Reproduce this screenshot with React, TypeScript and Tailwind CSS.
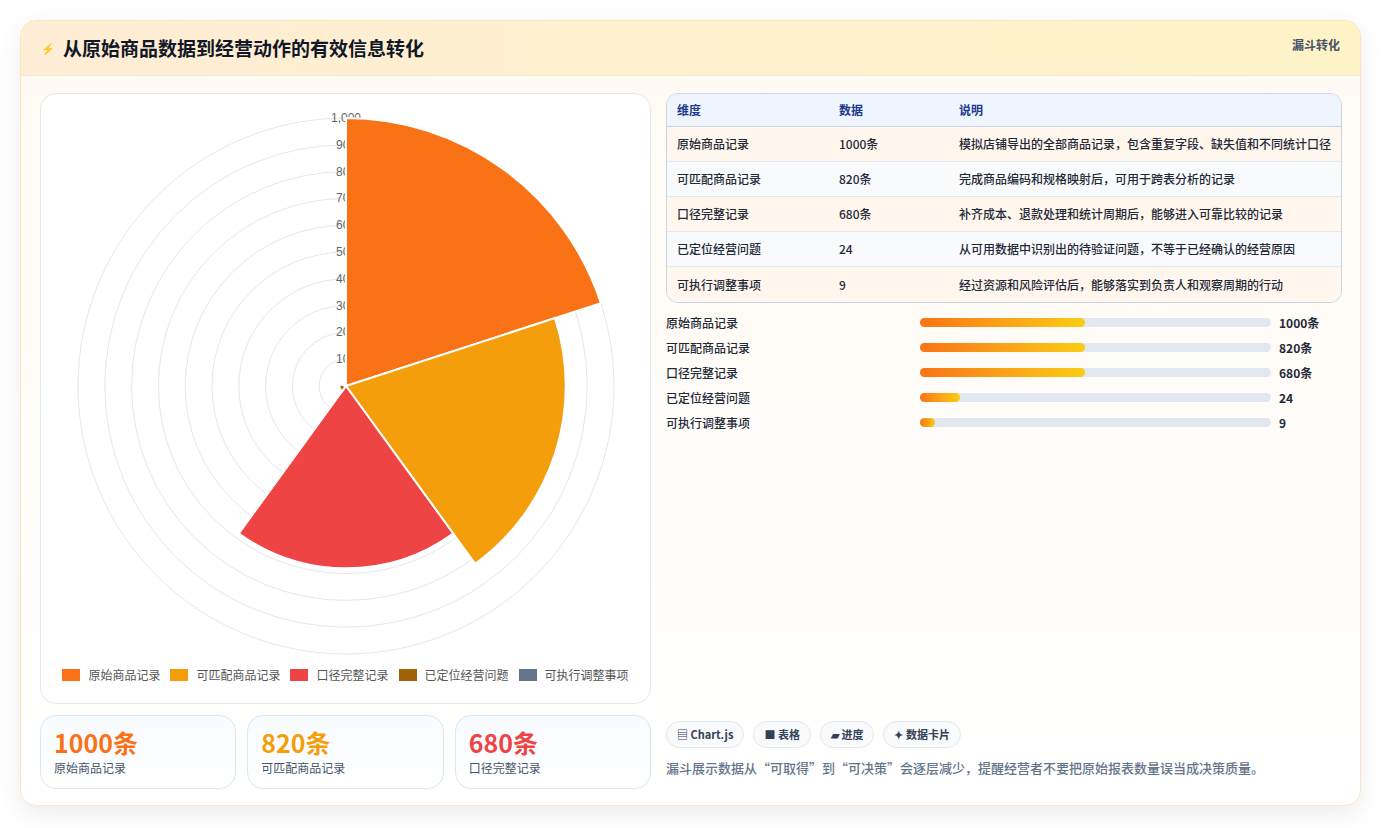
import React from "react";

const rows = [
  ["原始商品记录", "1000条", "模拟店铺导出的全部商品记录，包含重复字段、缺失值和不同统计口径"],
  ["可匹配商品记录", "820条", "完成商品编码和规格映射后，可用于跨表分析的记录"],
  ["口径完整记录", "680条", "补齐成本、退款处理和统计周期后，能够进入可靠比较的记录"],
  ["已定位经营问题", "24", "从可用数据中识别出的待验证问题，不等于已经确认的经营原因"],
  ["可执行调整事项", "9", "经过资源和风险评估后，能够落实到负责人和观察周期的行动"],
];
const bars = [
  ["原始商品记录", 165, "1000条"],
  ["可匹配商品记录", 165, "820条"],
  ["口径完整记录", 165, "680条"],
  ["已定位经营问题", 40, "24"],
  ["可执行调整事项", 15, "9"],
] as const;
const segs = [
  { v: 1000, c: "#f97316", n: "原始商品记录" },
  { v: 820, c: "#f59e0b", n: "可匹配商品记录" },
  { v: 680, c: "#ef4444", n: "口径完整记录" },
  { v: 24, c: "#a16207", n: "已定位经营问题" },
  { v: 9, c: "#64748b", n: "可执行调整事项" },
];

function Polar() {
  const cx = 305, cy = 289, R = 268;
  const arc = (r: number, a0: number, a1: number) => {
    const p = (a: number) => [cx + r * Math.cos((a * Math.PI) / 180), cy + r * Math.sin((a * Math.PI) / 180)];
    const [x0, y0] = p(a0), [x1, y1] = p(a1);
    return `M${cx},${cy} L${x0},${y0} A${r},${r} 0 0 1 ${x1},${y1} Z`;
  };
  return (
    <svg width="610" height="565" className="block">
      {Array.from({ length: 10 }, (_, i) => (
        <circle key={i} cx={cx} cy={cy} r={(R * (i + 1)) / 10} fill="none" stroke="#e5e7eb" strokeWidth="1" />
      ))}
      {Array.from({ length: 10 }, (_, i) => {
        const v = (i + 1) * 100;
        return (
          <text key={i} x={cx} y={cy - (R * (i + 1)) / 10 + 4} textAnchor="middle" fontSize="12" fill="#666" fontFamily="Liberation Sans, sans-serif">
            {v === 1000 ? "1,000" : v}
          </text>
        );
      })}
      {segs.map((s, i) => (
        <path key={i} d={arc((R * s.v) / 1000, -90 + i * 72, -18 + i * 72)} fill={s.c} stroke="#fff" strokeWidth="2" />
      ))}
    </svg>
  );
}

export default function App() {
  return (
    <div className="w-[1381px] h-[828px] bg-white p-[20px]" style={{ fontFamily: "'Noto Sans CJK SC', 'Noto Sans', sans-serif" }}>
      <div className="h-[786px] rounded-2xl border border-[#fde3c0] overflow-hidden shadow-[0_8px_24px_rgba(0,0,0,0.08)] bg-gradient-to-b from-[#fffaf3] to-white flex flex-col">
        <div className="h-[55px] shrink-0 bg-gradient-to-r from-[#ffedd5] to-[#fef3c7] border-b border-[#f2e6d3] flex items-center justify-between px-5">
          <div className="flex items-center gap-2">
            <span className="text-[#4f46e5] text-[11px]">⚡</span>
            <span className="text-[19px] font-bold text-[#111827]">从原始商品数据到经营动作的有效信息转化</span>
          </div>
          <span className="text-[12px] font-bold text-[#475569] self-start mt-[15px]">漏斗转化</span>
        </div>
        <div className="flex gap-[15px] px-[19px] pt-[17px]">
          <div className="w-[611px] flex flex-col gap-[11px]">
            <div className="h-[611px] rounded-2xl border border-[#e2e8f0] bg-white pt-[3px] flex flex-col">
              <Polar />
              <div className="flex justify-center gap-[10px] mt-[4px] text-[12px] text-[#555]">
                {segs.map((s) => (
                  <div key={s.n} className="flex items-center gap-[8px]">
                    <span className="w-[18px] h-[12px]" style={{ background: s.c }} />
                    {s.n}
                  </div>
                ))}
              </div>
            </div>
            <div className="grid grid-cols-3 gap-[11px]">
              {[["1000条", "#f97316", "原始商品记录"], ["820条", "#f59e0b", "可匹配商品记录"], ["680条", "#ef4444", "口径完整记录"]].map(([v, c, l]) => (
                <div key={l} className="h-[74px] rounded-2xl border border-[#dbe6f3] bg-gradient-to-b from-[#f8fbff] to-white px-[13px] pt-[10px]">
                  <div className="text-[25px] font-bold leading-[32px]" style={{ color: c }}>{v}</div>
                  <div className="text-[12px] text-[#475569] mt-[1px]">{l}</div>
                </div>
              ))}
            </div>
          </div>
          <div className="flex-1 flex flex-col">
            <div className="rounded-xl border border-[#cbd5e1] overflow-hidden text-[12px]">
              <div className="grid grid-cols-[162px_120px_1fr] h-[33px] items-center bg-[#eef5ff] border-b border-[#cbd5e1] px-[10px] font-bold text-[#1e3a8a]">
                <span>维度</span><span>数据</span><span>说明</span>
              </div>
              {rows.map((r, i) => (
                <div key={i} className={`grid grid-cols-[162px_120px_1fr] h-[35px] items-center px-[10px] font-medium text-[#1f2937] ${i % 2 === 0 ? "bg-[#fff7ed]" : "bg-[#f8fafc]"} ${i < 4 ? "border-b border-[#e2e8f0]" : ""}`}>
                  <span>{r[0]}</span><span>{r[1]}</span><span className="whitespace-nowrap">{r[2]}</span>
                </div>
              ))}
            </div>
            <div className="flex flex-col gap-[10px] mt-[12px]">
              {bars.map(([l, w, v]) => (
                <div key={l} className="flex items-center h-[15px] text-[12px] font-medium text-[#1f2937]">
                  <span className="w-[254px]">{l}</span>
                  <div className="w-[351px] h-[9px] rounded-full bg-[#e2e8f0]">
                    <div className="h-full rounded-full bg-gradient-to-r from-[#f97316] to-[#facc15]" style={{ width: w }} />
                  </div>
                  <span className="ml-[8px] font-bold">{v}</span>
                </div>
              ))}
            </div>
            <div className="mt-auto flex gap-[9px] text-[11px] font-bold text-[#334155]">
              {["▤ Chart.js", "■ 表格", "▰ 进度", "✦ 数据卡片"].map((t) => (
                <span key={t} className="h-[27px] px-[10px] rounded-full border border-[#e2e8f0] bg-[#f8fafc] flex items-center">{t}</span>
              ))}
            </div>
            <div className="text-[13px] text-[#64748b] font-medium mt-[10px] mb-[12px]">漏斗展示数据从“可取得”到“可决策”会逐层减少，提醒经营者不要把原始报表数量误当成决策质量。</div>
          </div>
        </div>
      </div>
    </div>
  );
}
